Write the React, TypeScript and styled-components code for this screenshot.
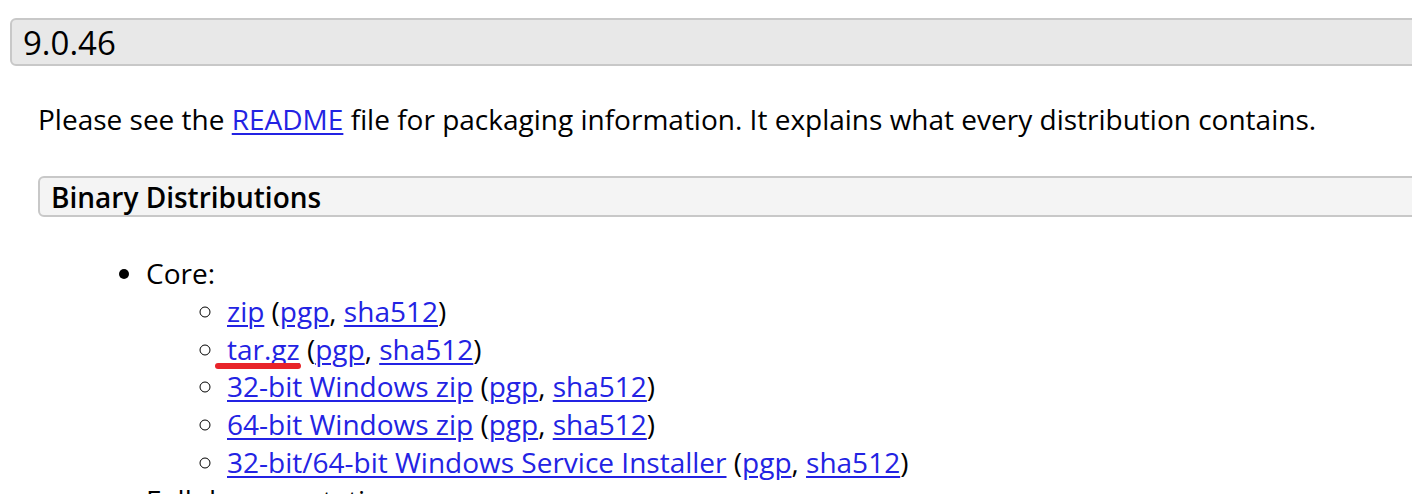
import React from "react";
import styled, { createGlobalStyle } from "styled-components";

const Global = createGlobalStyle`
  html, body { margin: 0; padding: 0; background: #fff; overflow: hidden; }
  body { font-family: "Open Sans", "DejaVu Sans", sans-serif; color: #000; }
`;

const Page = styled.div`
  padding: 18px 0 0 10px;
  width: 1412px;
  height: 494px;
  box-sizing: border-box;
  overflow: hidden;
`;

const VersionTitle = styled.h3`
  margin: 0 -30px 0 0;
  height: 48px;
  box-sizing: border-box;
  background: #e8e8e8;
  border: 2px solid #c8c8c8;
  border-radius: 6px;
  padding: 2px 0 0 11px;
  font-size: 33px;
  font-weight: 500;
  line-height: 44px;
  display: flex;
  align-items: center;
`;

const Body = styled.div`
  padding-left: 28px;
`;

const Para = styled.p`
  margin: 34px 0 0 0;
  font-size: 28px;
  line-height: 38px;
`;

const SubTitle = styled.h4`
  margin: 38px -30px 0 0;
  height: 41px;
  box-sizing: border-box;
  background: #f4f4f4;
  border: 2px solid #c8c8c8;
  border-radius: 6px;
  padding: 0 0 0 11px;
  font-size: 28px;
  font-weight: 600;
  display: flex;
  align-items: center;
`;

const Outer = styled.ul`
  margin: 38px 0 0 0;
  padding-left: 108px;
  list-style: disc;
  font-size: 28px;
  line-height: 37.8px;
`;

const Inner = styled.ul`
  margin: 0;
  padding-left: 81px;
  list-style: circle;
`;

const Item = styled.li`
  position: relative;
`;

const Link = styled.a`
  color: #2323e3;
  text-decoration: underline;
  text-underline-offset: 3px;
  text-decoration-thickness: 2px;
`;

const Marker = styled.span`
  position: absolute;
  left: -12px;
  top: 32px;
  width: 86px;
  height: 6px;
  border-radius: 3px;
  background: #e8242a;
`;

const Sums: React.FC = () => (
  <>
    {" ("}
    <Link href="#">pgp</Link>, <Link href="#">sha512</Link>)
  </>
);

export default function App() {
  const rows = [
    "zip",
    "tar.gz",
    "32-bit Windows zip",
    "64-bit Windows zip",
    "32-bit/64-bit Windows Service Installer",
  ];
  return (
    <>
      <Global />
      <Page>
        <VersionTitle>9.0.46</VersionTitle>
        <Body>
          <Para>
            Please see the <Link href="#">README</Link> file for packaging
            information. It explains what every distribution contains.
          </Para>
          <SubTitle>Binary Distributions</SubTitle>
          <Outer>
            <li>
              Core:
              <Inner>
                {rows.map((r) => (
                  <Item key={r}>
                    <Link href="#">{r}</Link>
                    <Sums />
                    {r === "tar.gz" && <Marker />}
                  </Item>
                ))}
              </Inner>
            </li>
            <li>Full documentation:</li>
          </Outer>
        </Body>
      </Page>
    </>
  );
}
